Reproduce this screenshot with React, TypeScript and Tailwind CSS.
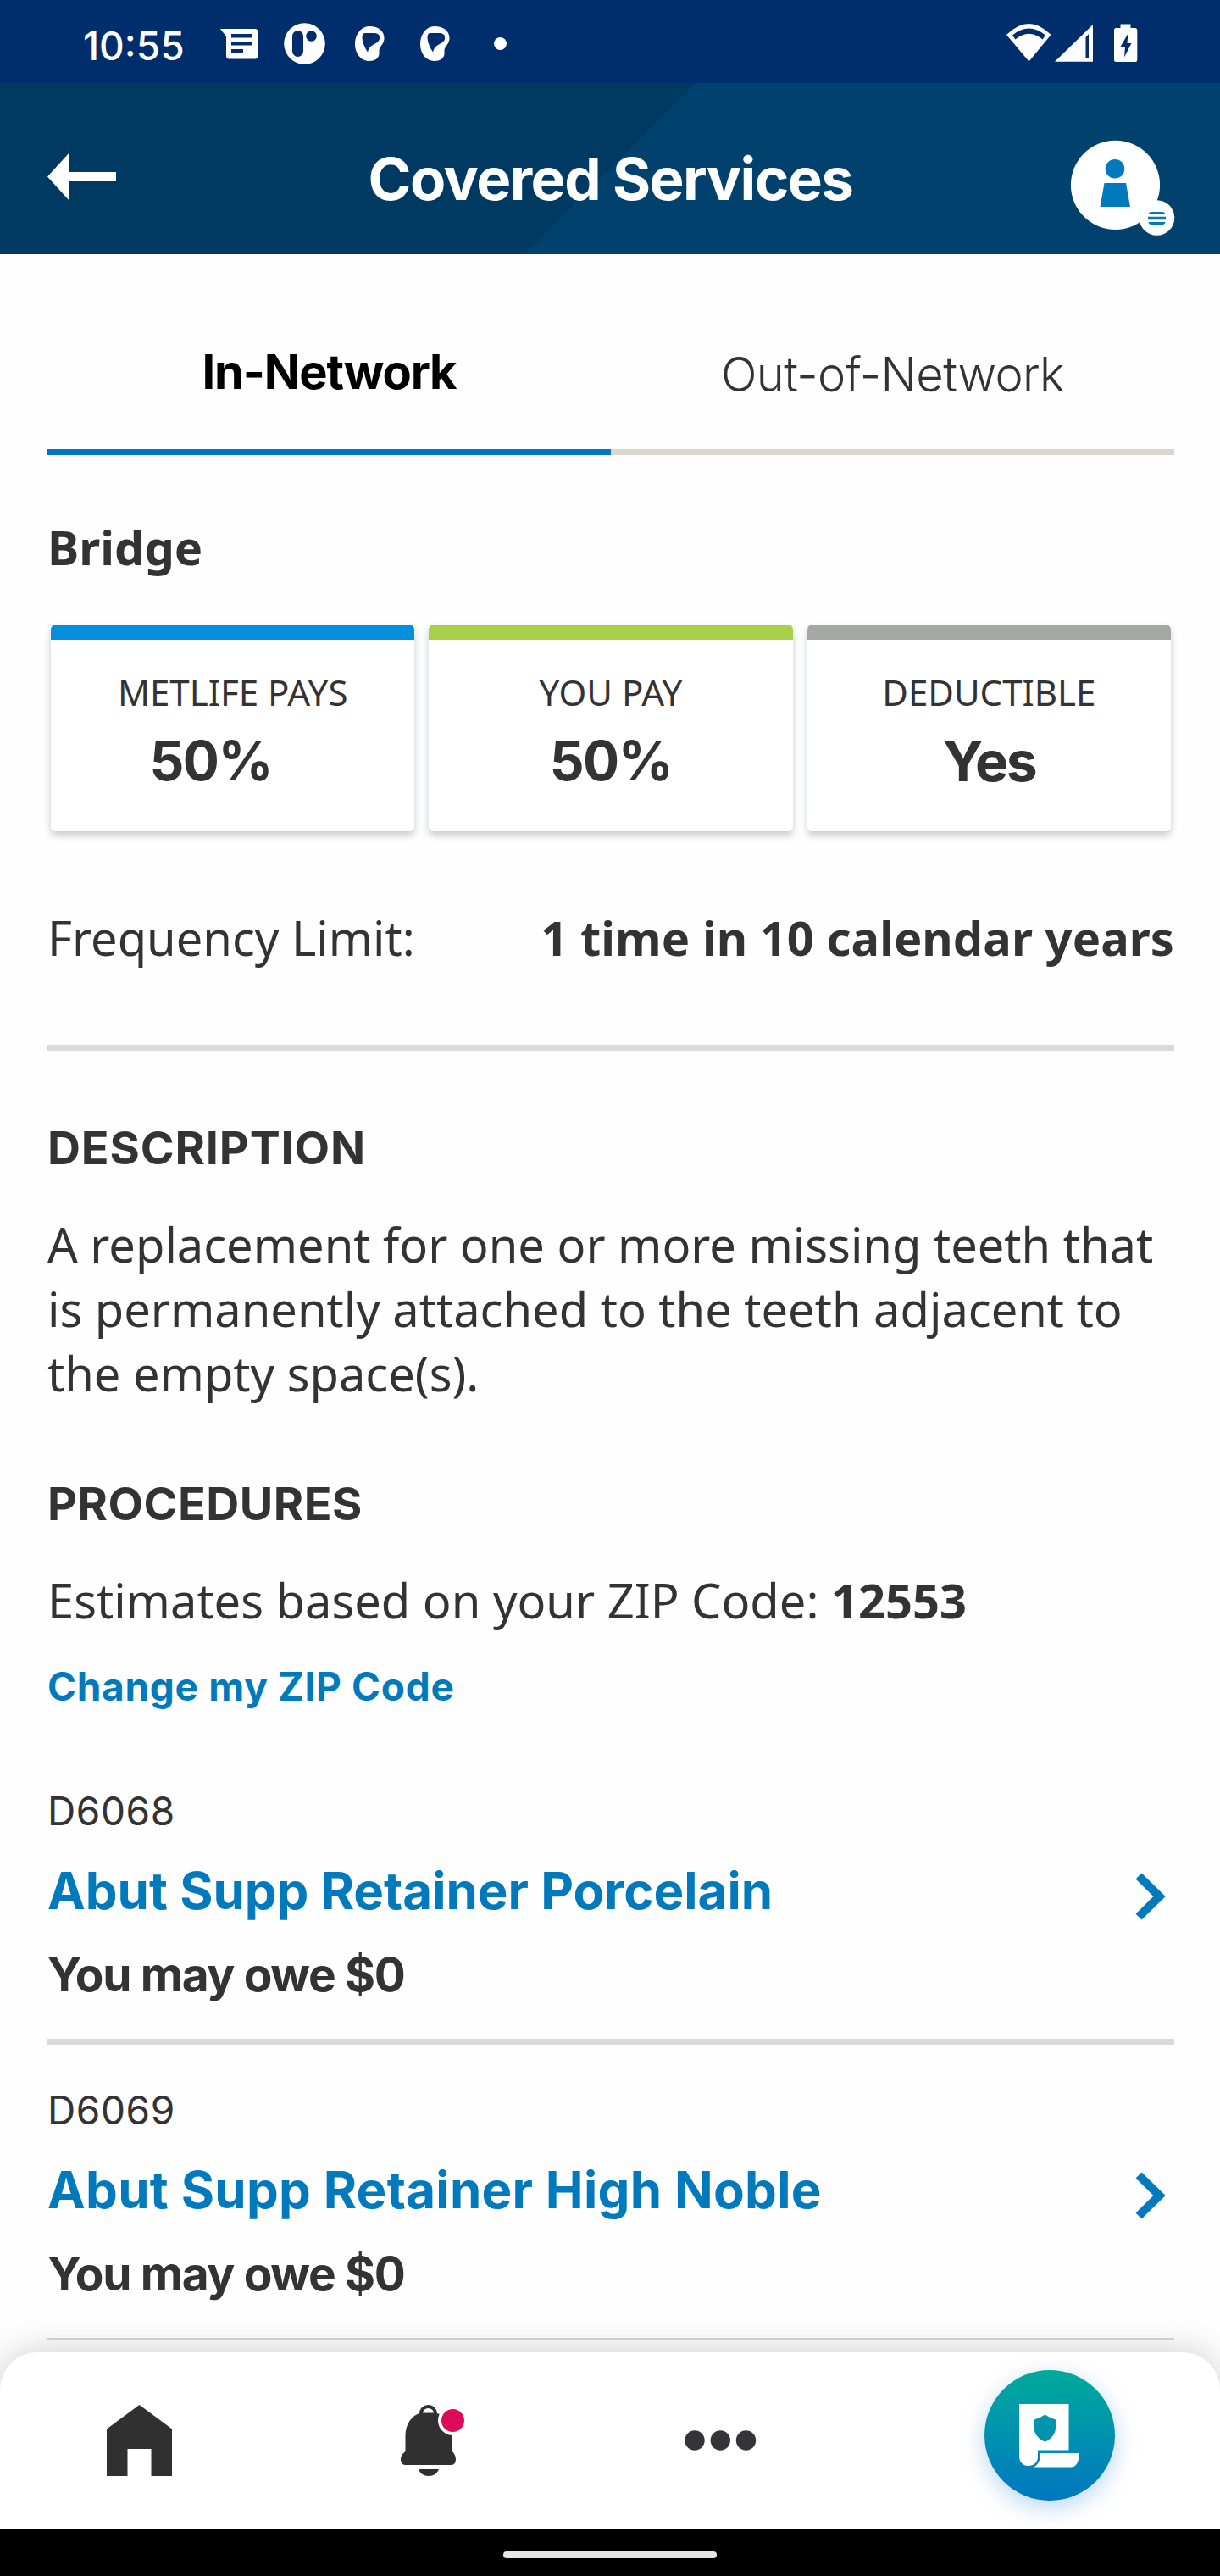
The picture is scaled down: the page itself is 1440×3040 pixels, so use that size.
import type { ReactNode } from "react";

function MessagesIcon() {
  return (
    <svg className="h-[98px] w-[60px]" viewBox="255 0 60 98">
      <path
        fill="#fff"
        fillRule="evenodd"
        d="M260 34H301Q304.500 34 304.500 37.500V66Q304.500 69.500 301 69.500H270.500Q267 69.500 267 66V43ZM273 40V44.500H298V40ZM273 49.500V53.500H298V49.500ZM273 58V62.500H287V58Z"
      />
    </svg>
  );
}

function PillBadgeIcon() {
  return (
    <svg className="h-[98px] w-[100px]" viewBox="315 0 100 98">
      <circle cx="359.500" cy="51.500" r="24.300" fill="#fff" />
      <rect x="345" y="36" width="13" height="31" rx="6.500" fill="#002d6b" />
      <circle cx="367.500" cy="42.500" r="6.300" fill="#002d6b" />
    </svg>
  );
}

function SwirlIcon() {
  return (
    <svg className="h-[98px] w-[77px]" viewBox="415 0 77 98">
      <path
        fill="#fff"
        fillRule="evenodd"
        d="M436 31C447 31 454 37 453.500 46C453 52 448 55 447.500 59V64C447 69 442 72 436 72C425 72 419 62 419 52C419 41 426 31 436 31ZM431 39Q427.500 39 427.500 44C427.500 50 431 57 434 61.500C436 52 444 53 447.500 47.500C449.500 43 447 39 442 39Z"
      />
    </svg>
  );
}

function SystemIcons() {
  return (
    <svg className="h-[98px] w-[180px]" viewBox="1180 0 180 98">
      <path
        fill="#fff"
        fillRule="evenodd"
        d="M1188 41Q1214.500 15 1240.500 41L1214.500 72.500ZM1195 41.500L1198.500 46.500Q1214.500 33 1230.500 46.500L1234 41.500Q1214.500 25.500 1195 41.500Z"
      />
      <path
        fill="#fff"
        fillRule="evenodd"
        d="M1245 72.700L1290 29V72.700ZM1281.500 44V68H1285V40Z"
      />
      <path
        fill="#fff"
        fillRule="evenodd"
        d="M1322.500 28.500H1334.500V33H1340Q1342.300 33 1342.300 35.500V70.500Q1342.300 73 1340 73H1317.500Q1315 73 1315 70.500V35.500Q1315 33 1317.500 33H1322.500ZM1331.500 39.500L1322.500 55H1328L1327 67.500L1335.500 51H1330.500Z"
      />
    </svg>
  );
}

function StatusBar() {
  return (
    <div className="flex h-[98px] shrink-0 items-center bg-[#002d6b]">
      <span className="w-[255px] pt-[9px] pl-[98px] text-[46px] leading-[88px] font-medium text-white">
        10:55
      </span>
      <MessagesIcon />
      <PillBadgeIcon />
      <SwirlIcon />
      <SwirlIcon />
      <span className="mt-[4px] ml-[14px] size-[15px] rounded-full bg-white" />
      <span className="flex-1" />
      <SystemIcons />
      <span className="w-20" />
    </div>
  );
}

function Header() {
  return (
    <header className="flex h-[202px] shrink-0 items-center justify-between bg-[linear-gradient(135deg,#003962_50%,#00426d_50%)]">
      <svg className="h-[202px] w-[200px]" viewBox="0 98 200 202">
        <path fill="#fff" d="M56 208.500L82 180V203H137V214H82V237Z" />
      </svg>
      <h1 className="pt-[24px] pl-[1px] text-[69px] leading-[100px] font-bold tracking-[-1.55px] text-white">
        Covered Services
      </h1>
      <svg className="h-[202px] w-[200px]" viewBox="1240 98 200 202">
        <circle cx="1316.500" cy="218.300" r="52.600" fill="#fff" />
        <circle cx="1316" cy="199.300" r="11.300" fill="#007abd" />
        <path fill="#007abd" d="M1303.500 216H1329L1334 244H1298.500Z" />
        <circle cx="1365.500" cy="257" r="20.800" fill="#fff" />
        <path
          fill="#007abd"
          d="M1359 250H1372Q1375 250 1375.500 252.800H1355.500Q1356 250 1359 250ZM1355 255.800H1376V259.200H1355ZM1355.500 262H1375.500Q1375 265 1372 265H1359Q1356 265 1355.500 262Z"
        />
      </svg>
    </header>
  );
}

function Tabs() {
  return (
    <div className="grid grid-cols-2 text-center text-[56px] leading-[72px]">
      <div className="h-[237px] border-b-[7px] border-[#0079be] pt-[103px] font-bold tracking-[-1.2px] text-black">
        In-Network
      </div>
      <div className="h-[237px] border-b-[7px] border-[#d8d8d0] pt-[106px] font-light tracking-[-0.6px]">
        Out-of-Network
      </div>
    </div>
  );
}

function CostCard({ bar, label, children }: { bar: string; label: string; children: ReactNode }) {
  return (
    <div className="h-[244px] flex-1 overflow-hidden rounded-[6px] bg-white text-center">
      <div className={`h-[18px] ${bar}`} />
      <div className="pt-[34px] font-['Noto_Sans',sans-serif] text-[42px] leading-[56px]">{label}</div>
      <div className="pt-[13px] text-[64px] leading-[80px] font-bold tracking-[-1.5px]">{children}</div>
    </div>
  );
}

function CardShadow({ children }: { children: ReactNode }) {
  return (
    <div className="flex flex-1 rounded-[6px] shadow-[0_5px_9px_rgba(30,40,50,0.24)]">{children}</div>
  );
}

function Procedure({ code, name, owe }: { code: string; name: ReactNode; owe: string }) {
  return (
    <article className="flex items-center justify-between">
      <div>
        <div className="text-[46px] leading-[60px] tracking-[0.6px]">{code}</div>
        <h3 className="mt-[26px] text-[60px] leading-[76px] font-bold text-[#007abd]">{name}</h3>
        <div className="mt-[23px] text-[55px] leading-[76px] font-bold tracking-[-1.35px]">{owe}</div>
      </div>
      <svg className="mr-[10px] h-[56px] w-[36px]" viewBox="0 0 36 56">
        <path d="M4 4L28.500 28L4 52" fill="none" stroke="#007abd" strokeWidth="10" />
      </svg>
    </article>
  );
}

function BottomNav() {
  return (
    <nav className="relative flex h-[208px] shrink-0 rounded-t-[44px] bg-white shadow-[0_0_44px_rgba(0,0,0,0.2)]">
      <svg className="ml-[100px] h-[208px] w-[130px]" viewBox="100 2776 130 208">
        <path
          fill="#303030"
          d="M164.500 2838L203 2866.500V2922H178.500V2890H150.500V2922H126V2866.500Z"
        />
      </svg>
      <svg className="ml-[210px] h-[208px] w-[140px]" viewBox="440 2776 140 208">
        <path
          d="M497 2851V2848A8.500 8 0 0 1 514 2848V2851"
          fill="none"
          stroke="#303030"
          strokeWidth="4"
        />
        <path
          fill="#303030"
          d="M497 2847.500H514C526 2850 534 2861 534 2874V2893C537 2896 538 2900 538 2903Q537.500 2909 532 2909H479Q473.500 2909 473 2903C473 2900 474 2896 478.500 2893V2874C478.500 2861 486 2850 497 2847.500ZM494 2914H518Q515 2922 506 2922Q497 2922 494 2914Z"
        />
        <circle cx="534.500" cy="2856.500" r="17.500" fill="#fff" />
        <circle cx="534.500" cy="2856.500" r="13.500" fill="#dd0a58" />
      </svg>
      <svg className="ml-[210px] h-[208px] w-[120px]" viewBox="790 2776 120 208">
        <g fill="#353438">
          <circle cx="820" cy="2880" r="11.700" />
          <circle cx="850.300" cy="2880" r="11.700" />
          <circle cx="880.500" cy="2880" r="11.700" />
        </g>
      </svg>
      <button className="mt-[21px] ml-[252px] size-[154px] rounded-full bg-linear-to-b from-[#00aa9b] to-[#0076bf] shadow-[0_8px_28px_rgba(0,110,210,0.28)]">
        <svg className="size-[154px]" viewBox="1162 2797 154 154">
          <path
            fill="#fff"
            fillRule="evenodd"
            d="M1203 2837H1261.500V2891.500H1225V2899C1225 2906 1220 2910 1214 2910C1207 2910 1203 2905 1203 2899ZM1233.500 2849.500Q1228 2853.500 1220.500 2855.500V2865C1220.500 2873 1227 2879 1233.500 2881.500C1240 2879 1246 2873 1246 2865V2855.500Q1239 2853.500 1233.500 2849.500Z"
          />
          <path
            fill="#fff"
            d="M1228 2895H1273.500V2897C1273.500 2906 1270 2911.500 1264 2911.500H1220.500C1226 2908 1228 2903 1228 2895Z"
          />
        </svg>
      </button>
    </nav>
  );
}

export default function App() {
  return (
    <div className="flex h-[3040px] w-[1440px] flex-col overflow-hidden bg-[#fefefe] font-['Inter',sans-serif] text-[#333333]">
      <StatusBar />
      <Header />
      <main className="h-[2476px] shrink-0 pr-[54px] pl-14">
        <Tabs />
        <h2 className="mt-[70px] font-['Noto_Sans',sans-serif] text-[56px] leading-[76px] font-bold">Bridge</h2>
        <div className="mx-1 mt-[54px] flex gap-[17px]">
          <CardShadow>
            <CostCard bar="bg-[#058fdb]" label="METLIFE PAYS">
              <span className="pr-[52px]">50%</span>
            </CostCard>
          </CardShadow>
          <CardShadow>
            <CostCard bar="bg-[#a8cf4a]" label="YOU PAY">
              50%
            </CostCard>
          </CardShadow>
          <CardShadow>
            <CostCard bar="bg-[#a4a8a5]" label="DEDUCTIBLE">
              <span className="text-[66px] tracking-[-2.500px]">Yes</span>
            </CostCard>
          </CardShadow>
        </div>
        <div className="mt-[87px] flex justify-between font-['Noto_Sans',sans-serif] text-[56px] leading-[76px]">
          <span>Frequency Limit:</span>
          <span className="font-bold tracking-[0.06px]">1 time in 10 calendar years</span>
        </div>
        <hr className="mt-[89px] h-[7px] border-0 bg-[#dadada]" />

        <h2 className="mt-[77px] text-[54px] leading-[76px] font-bold tracking-[0.85px]">DESCRIPTION</h2>
        <p className="mt-[37px] font-['Noto_Sans',sans-serif] text-[56px] leading-[76px]">
          A replacement for one or more missing teeth that is permanently attached to the teeth adjacent to the
          empty space(s).
        </p>

        <h2 className="mt-[79px] text-[54px] leading-[76px] font-bold tracking-[0.5px]">PROCEDURES</h2>
        <p className="mt-[37px] font-['Noto_Sans',sans-serif] text-[56px] leading-[76px]">
          Estimates based on your ZIP Code: <b className="font-bold">12553</b>
        </p>
        <a className="mt-[32px] block text-[46px] leading-[64px] font-bold tracking-[0.7px] text-[#007abd]">
          Change my ZIP Code
        </a>

        <div className="mt-[85px]">
          <Procedure code="D6068" name="Abut Supp Retainer Porcelain" owe="You may owe $0" />
          <hr className="mt-[38px] mb-[47px] h-[7px] border-0 bg-[#dadada]" />
          <Procedure
            code="D6069"
            name={<span className="tracking-[0.3px]">Abut Supp Retainer High Noble</span>}
            owe="You may owe $0"
          />
          <hr className="mt-[38px] h-[3px] border-0 bg-[#d8d8d8]" />
        </div>
      </main>
      <BottomNav />
      <div className="relative flex h-[56px] shrink-0 justify-center bg-black">
        <span className="mt-[27px] h-2 w-[252px] rounded-full bg-[#e6e6e6]" />
      </div>
    </div>
  );
}
